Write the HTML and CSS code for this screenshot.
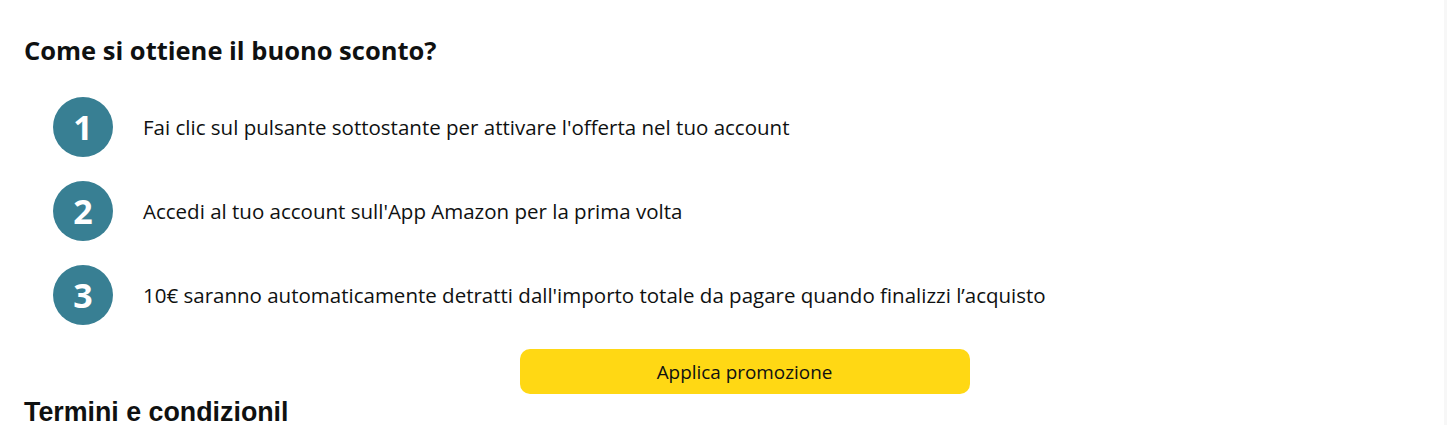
FILE: index.html
```html
<!DOCTYPE html>
<html lang="it">
<head>
    <meta charset="UTF-8">
    <meta name="viewport" content="width=device-width, initial-scale=1.0">
    <title>Buono sconto</title>
    <link rel="stylesheet" href="styles.css">
</head>
<body>

<div class="page">
    <h2 class="title">Come si ottiene il buono sconto?</h2>

    <ol class="steps">
        <li class="step">
            <span class="num">1</span>
            <span class="step-text">Fai clic sul pulsante sottostante per attivare l'offerta nel tuo account</span>
        </li>
        <li class="step">
            <span class="num">2</span>
            <span class="step-text">Accedi al tuo account sull'App Amazon per la prima volta</span>
        </li>
        <li class="step">
            <span class="num">3</span>
            <span class="step-text">10€ saranno automaticamente detratti dall'importo totale da pagare quando finalizzi l’acquisto</span>
        </li>
    </ol>

    <div class="actions">
        <button class="promo-btn" type="button">Applica promozione</button>
    </div>

    <h2 class="terms">Termini e condizionil</h2>
</div>

</body>
</html>
```

FILE: styles.css
```css
body {
    margin: 0;
    background-color: #fff;
    color: #0f1111;
    font-family: "Open Sans", "Noto Sans", sans-serif;
    overflow: hidden;
}
.page {
    padding: 30px 24px 0;
    border-right: 3px solid #f7f7f7;
    min-height: 425px;
    box-sizing: border-box;
}
.title {
    margin: 0;
    font-size: 25.5px;
    font-weight: 700;
    line-height: 40px;
}
.steps {
    list-style: none;
    margin: 27px 0 0;
    padding: 0 0 0 29px;
    display: flex;
    flex-direction: column;
    gap: 24px;
}
.step {
    display: flex;
    align-items: center;
    gap: 30px;
}
.num {
    width: 60px;
    height: 60px;
    border-radius: 50%;
    background-color: #387f93;
    color: #fff;
    font-size: 34px;
    font-weight: 700;
    display: flex;
    align-items: center;
    justify-content: center;
    flex-shrink: 0;
}
.step-text {
    font-size: 20.5px;
    line-height: 28px;
}
.actions {
    display: flex;
    justify-content: center;
    padding-left: 45px;
    margin-top: 24px;
}
.promo-btn {
    width: 450px;
    height: 45px;
    border: none;
    border-radius: 10px;
    background-color: #ffd814;
    color: #0f1111;
    font-family: "Open Sans", "Noto Sans", sans-serif;
    font-size: 18.9px;
    cursor: pointer;
}
.terms {
    margin: 2px 0 0;
    font-family: "Liberation Sans", Arial, sans-serif;
    font-size: 26.8px;
    font-weight: 700;
    line-height: 32px;
}
```
